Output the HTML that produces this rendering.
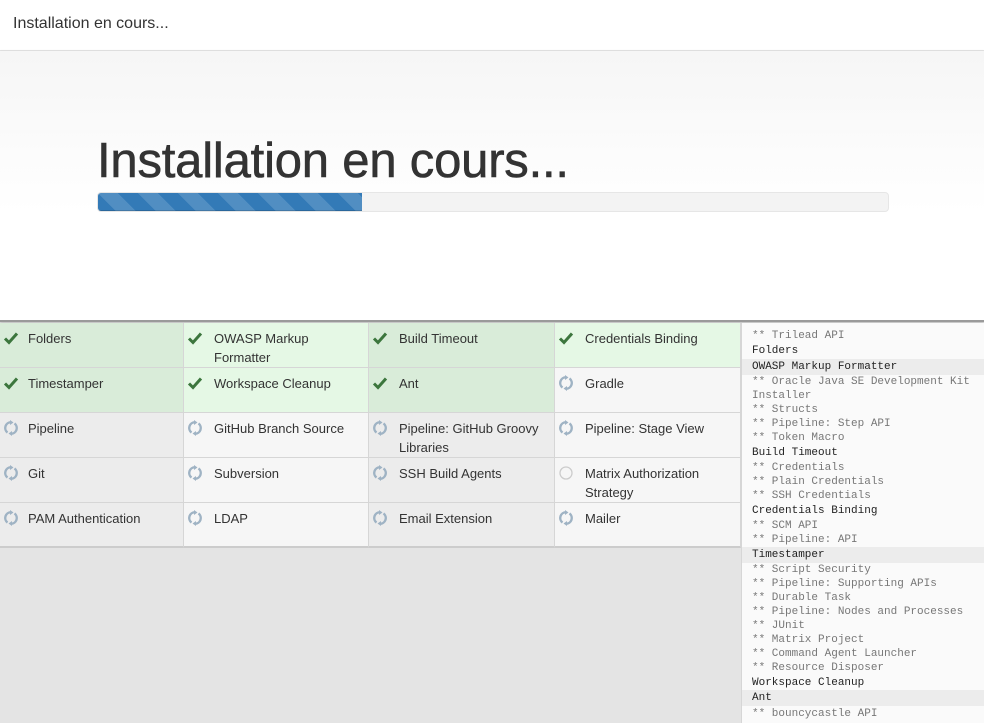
<!DOCTYPE html>
<html><head><meta charset="utf-8"><style>
*{margin:0;padding:0;box-sizing:border-box}
body{width:984px;height:723px;overflow:hidden;background:#e4e4e4;font-family:"Liberation Sans",sans-serif;color:#333;position:relative}
.hdr{position:absolute;left:0;top:0;width:984px;height:51px;background:#fff;border-bottom:1px solid #e5e5e5;font-size:16px;padding:15px 13px;color:#333}
.hero{position:absolute;left:0;top:51px;width:984px;height:271px;background:linear-gradient(#f6f6f6,#fff 60%);border-bottom:2px solid #9a9a9a;box-shadow:0 1px 3px rgba(0,0,0,.2)}
.hero h1{position:absolute;left:97px;top:82px;font-size:49px;font-weight:normal;color:#333;-webkit-text-stroke:0.6px #333;letter-spacing:-0.2px}
.bar{position:absolute;left:97px;top:141px;width:792px;height:20px;background:#f3f3f3;border-radius:4px;border:1px solid #e6e6e6;overflow:hidden}
.fill{width:264px;height:100%;background-color:#337ab7;background-image:linear-gradient(45deg,rgba(255,255,255,.15) 25%,transparent 25%,transparent 50%,rgba(255,255,255,.15) 50%,rgba(255,255,255,.15) 75%,transparent 75%,transparent);background-size:40px 40px;box-shadow:inset 0 -1px 0 rgba(0,0,0,.15)}
.grid{position:absolute;left:0;top:323px;width:741px}
.c{position:absolute;height:45px;border-right:1px solid #d6d6d6;border-bottom:1px solid #d6d6d6;font-size:13px;line-height:19px;padding:6px 0 0 28px}
.g1{background:#d9ecd9}.g2{background:#e5f8e5}.n1{background:#ececec}.n2{background:#f6f6f6}
.ic{position:absolute;left:3px;top:7px;width:16px;height:16px}
.log{position:absolute;left:741px;top:323px;width:243px;height:400px;background:#fafafa;border-left:1px solid #d6d6d6;font-family:"Liberation Mono",monospace;font-size:11px}
.l{position:absolute;left:0;width:243px;padding-left:10px;color:#777;line-height:14px;white-space:nowrap;margin-top:1px}
.p{color:#222}.hl{background:#ececec;line-height:16px}
</style></head><body>
<div class="hdr">Installation en cours...</div>
<div class="hero"><h1>Installation en cours...</h1><div class="bar"><div class="fill"></div></div></div>
<svg width="0" height="0" style="position:absolute"><defs>
<symbol id="ck" viewBox="0 0 16 16"><path d="M2 8.5l4 4 8-9" fill="none" stroke="#3c763d" stroke-width="3"/></symbol>
<symbol id="sp" viewBox="0 0 16 16"><g fill="none" stroke="#9fb3c4" stroke-width="2.4"><path d="M8 2.2A5.8 5.8 0 0 0 4.5 12.6"/><path d="M8 13.8A5.8 5.8 0 0 0 11.5 3.4"/></g><path d="M7 0l3.5 2.5L7 5z M9 11l-3.5 2.5L9 16z" fill="#9fb3c4"/></symbol>
<symbol id="ci" viewBox="0 0 16 16"><circle cx="8" cy="8" r="6" fill="none" stroke="#ccc" stroke-width="1.3"/></symbol>
</defs></svg>
<div class="grid">
<div class="c g1" style="left:0;top:0;width:184px"><svg class="ic"><use href="#ck"/></svg>Folders</div>
<div class="c g2" style="left:184px;top:0;width:185px;padding-left:30px"><svg class="ic"><use href="#ck"/></svg>OWASP Markup<br>Formatter</div>
<div class="c g1" style="left:369px;top:0;width:186px;padding-left:30px"><svg class="ic"><use href="#ck"/></svg>Build Timeout</div>
<div class="c g2" style="left:555px;top:0;width:186px;padding-left:30px"><svg class="ic"><use href="#ck"/></svg>Credentials Binding</div>

<div class="c g1" style="left:0;top:45px;width:184px"><svg class="ic"><use href="#ck"/></svg>Timestamper</div>
<div class="c g2" style="left:184px;top:45px;width:185px;padding-left:30px"><svg class="ic"><use href="#ck"/></svg>Workspace Cleanup</div>
<div class="c g1" style="left:369px;top:45px;width:186px;padding-left:30px"><svg class="ic"><use href="#ck"/></svg>Ant</div>
<div class="c n2" style="left:555px;top:45px;width:186px;padding-left:30px"><svg class="ic"><use href="#sp"/></svg>Gradle</div>

<div class="c n1" style="left:0;top:90px;width:184px"><svg class="ic"><use href="#sp"/></svg>Pipeline</div>
<div class="c n2" style="left:184px;top:90px;width:185px;padding-left:30px"><svg class="ic"><use href="#sp"/></svg>GitHub Branch Source</div>
<div class="c n1" style="left:369px;top:90px;width:186px;padding-left:30px"><svg class="ic"><use href="#sp"/></svg>Pipeline: GitHub Groovy<br>Libraries</div>
<div class="c n2" style="left:555px;top:90px;width:186px;padding-left:30px"><svg class="ic"><use href="#sp"/></svg>Pipeline: Stage View</div>

<div class="c n1" style="left:0;top:135px;width:184px"><svg class="ic"><use href="#sp"/></svg>Git</div>
<div class="c n2" style="left:184px;top:135px;width:185px;padding-left:30px"><svg class="ic"><use href="#sp"/></svg>Subversion</div>
<div class="c n1" style="left:369px;top:135px;width:186px;padding-left:30px"><svg class="ic"><use href="#sp"/></svg>SSH Build Agents</div>
<div class="c n2" style="left:555px;top:135px;width:186px;padding-left:30px"><svg class="ic"><use href="#ci"/></svg>Matrix Authorization<br>Strategy</div>

<div class="c n1" style="left:0;top:180px;width:184px;border-bottom:2px solid #ccc"><svg class="ic"><use href="#sp"/></svg>PAM Authentication</div>
<div class="c n2" style="left:184px;top:180px;width:185px;padding-left:30px;border-bottom:2px solid #ccc"><svg class="ic"><use href="#sp"/></svg>LDAP</div>
<div class="c n1" style="left:369px;top:180px;width:186px;padding-left:30px;border-bottom:2px solid #ccc"><svg class="ic"><use href="#sp"/></svg>Email Extension</div>
<div class="c n2" style="left:555px;top:180px;width:186px;padding-left:30px;border-bottom:2px solid #ccc"><svg class="ic"><use href="#sp"/></svg>Mailer</div>
</div>
<div class="log">
<div class="l" style="top:5px">** Trilead API</div>
<div class="l p" style="top:20px">Folders</div>
<div class="l p hl" style="top:35px">OWASP Markup Formatter</div>
<div class="l" style="top:51px">** Oracle Java SE Development Kit</div>
<div class="l" style="top:65px">Installer</div>
<div class="l" style="top:79px">** Structs</div>
<div class="l" style="top:93px">** Pipeline: Step API</div>
<div class="l" style="top:107px">** Token Macro</div>
<div class="l p" style="top:122px">Build Timeout</div>
<div class="l" style="top:137px">** Credentials</div>
<div class="l" style="top:151px">** Plain Credentials</div>
<div class="l" style="top:165px">** SSH Credentials</div>
<div class="l p" style="top:180px">Credentials Binding</div>
<div class="l" style="top:195px">** SCM API</div>
<div class="l" style="top:209px">** Pipeline: API</div>
<div class="l p hl" style="top:223px">Timestamper</div>
<div class="l" style="top:239px">** Script Security</div>
<div class="l" style="top:253px">** Pipeline: Supporting APIs</div>
<div class="l" style="top:267px">** Durable Task</div>
<div class="l" style="top:281px">** Pipeline: Nodes and Processes</div>
<div class="l" style="top:295px">** JUnit</div>
<div class="l" style="top:309px">** Matrix Project</div>
<div class="l" style="top:323px">** Command Agent Launcher</div>
<div class="l" style="top:337px">** Resource Disposer</div>
<div class="l p" style="top:352px">Workspace Cleanup</div>
<div class="l p hl" style="top:366px">Ant</div>
<div class="l" style="top:383px">** bouncycastle API</div>
</div>
</body></html>
